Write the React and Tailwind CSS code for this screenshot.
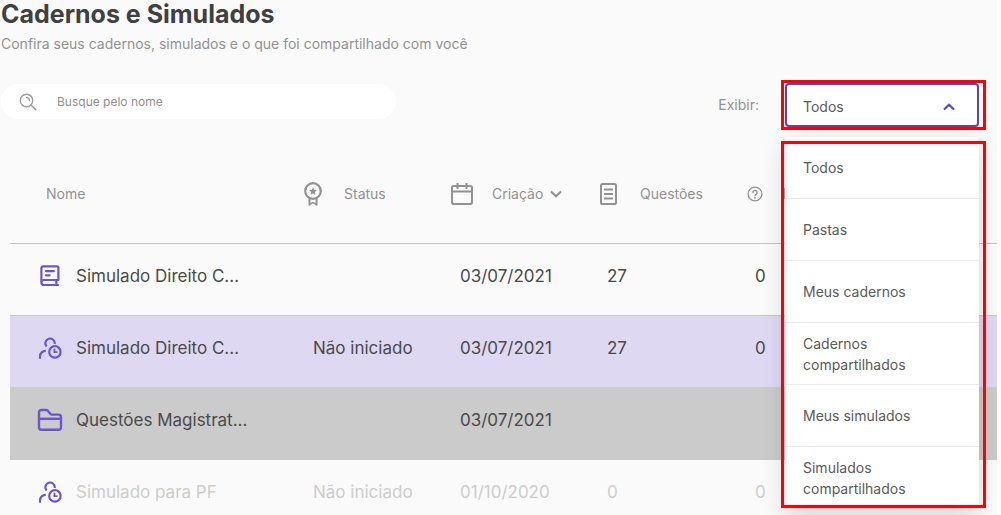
import { useState } from 'react';
import clsx from 'clsx';

const OPTIONS = [
  'Todos',
  'Pastas',
  'Meus cadernos',
  'Cadernos compartilhados',
  'Meus simulados',
  'Simulados compartilhados',
];

const ROWS = [
  { id: 1, type: 'book', name: 'Simulado Direito C...', status: '', date: '03/07/2021', total: '27', done: '0', tone: 'plain' },
  { id: 2, type: 'user', name: 'Simulado Direito C...', status: 'Não iniciado', date: '03/07/2021', total: '27', done: '0', tone: 'selected' },
  { id: 3, type: 'folder', name: 'Questões Magistrat...', status: '', date: '03/07/2021', total: '', done: '', tone: 'folder' },
  { id: 4, type: 'user', name: 'Simulado para PF', status: 'Não iniciado', date: '01/10/2020', total: '0', done: '0', tone: 'disabled' },
];

const TONES = {
  plain: 'border-[#c8c8c8] text-[#4a4a4a]',
  selected: 'border-[#cccccc] bg-[#ded8f2] text-[#4a4a4a]',
  folder: 'border-[#cccccc] bg-[#cbcbcb] text-[#4a4a4a]',
  disabled: 'border-[#c8c8c8] text-[#cdcdcd]',
};

function SearchIcon() {
  return (
    <svg width="18" height="18" viewBox="0 0 18 18" fill="none" stroke="currentColor" strokeWidth="1.4" strokeLinecap="round" aria-hidden="true">
      <circle cx="7.5" cy="7.5" r="6.2" />
      <path d="M12 12l4.8 4.8M7.6 4.6a2.9 2.9 0 0 1 2.8 2.8" />
    </svg>
  );
}

function MedalIcon() {
  return (
    <svg width="20" height="24" viewBox="0 0 20 24" fill="none" stroke="currentColor" strokeWidth="2.2" aria-hidden="true">
      <circle cx="10" cy="9" r="7.8" />
      <path d="M6.5 16v7.6M13.5 16v7.6" strokeWidth="2" />
      <path d="M6.5 22.4l3.5-1.8 3.5 1.8" strokeWidth="1.6" />
      <path d="M10 5.2l1.2 2.5 2.7.4-2 1.900.5 2.700-2.400-1.300-2.400 1.300.5-2.700-2-1.900 2.700-.4z" fill="currentColor" stroke="none" />
    </svg>
  );
}

function CalendarIcon() {
  return (
    <svg width="24" height="24" viewBox="0 0 24 24" fill="none" stroke="currentColor" strokeWidth="2" aria-hidden="true">
      <rect x="2" y="4" width="20" height="18" rx="1.8" />
      <path d="M2 9.5h20M7.5 1v6M16.5 1v6" />
    </svg>
  );
}

function SheetIcon() {
  return (
    <svg width="20" height="24" viewBox="0 0 20 24" fill="none" stroke="currentColor" strokeWidth="2" aria-hidden="true">
      <rect x="2" y="2" width="15" height="20" rx="1.6" />
      <path d="M5 7.5h9M5 12h9M5 16.5h9" />
    </svg>
  );
}

function HelpIcon() {
  return (
    <svg width="16" height="16" viewBox="0 0 16 16" fill="none" stroke="currentColor" strokeWidth="1.4" aria-hidden="true">
      <circle cx="8" cy="8" r="6.9" />
      <path d="M5.9 6.5a2.1 2.1 0 1 1 3.2 1.8c-.7.4-1.1.8-1.1 1.5" strokeLinecap="round" />
      <circle cx="8" cy="11.8" r=".9" fill="currentColor" stroke="none" />
    </svg>
  );
}

function BookIcon() {
  return (
    <svg width="20" height="22" viewBox="0 0 20 22" fill="none" stroke="currentColor" strokeWidth="2.2" strokeLinejoin="round" aria-hidden="true">
      <path d="M18.8 20H4a2.6 2.6 0 0 1-2.6-2.6V3.2A1.9 1.9 0 0 1 3.3 1.4H17a1.4 1.4 0 0 1 1.4 1.4V15H4a2.5 2.5 0 0 0-2.5 2.5M16.400 15v4.800" />
      <path d="M6 6.2h7.8M6 10.400h3.600" strokeLinecap="round" />
    </svg>
  );
}

function UserClockIcon() {
  return (
    <svg width="24" height="22" viewBox="0 0 24 22" fill="none" stroke="currentColor" strokeWidth="2.2" aria-hidden="true">
      <path d="M8.6 9.4a4.7 4.7 0 1 1 8.1-2.400" />
      <path d="M2 21.800v-2.400a5.600 5.600 0 0 1 5.800-5.600" />
      <circle cx="16.900" cy="14.900" r="5.700" />
      <path d="M16.400 11.800v3.400h3" strokeWidth="1.800" />
    </svg>
  );
}

function FolderIcon() {
  return (
    <svg width="26" height="24" viewBox="0 0 26 24" fill="none" stroke="currentColor" strokeWidth="2.4" strokeLinejoin="round" aria-hidden="true">
      <path d="M2 19.3V4.400A2.400 2.400 0 0 1 4.400 2H9a2.400 2.400 0 0 1 1.800.8l2.400 3a2.400 2.400 0 0 0 1.800.8h6.600A2.400 2.400 0 0 1 24 9v10.300a2.400 2.400 0 0 1-2.400 2.400H4.400A2.400 2.400 0 0 1 2 19.300z" />
      <path d="M2 10.800h22" />
    </svg>
  );
}

function Chevron({ up }) {
  return (
    <svg width="12" height="8" viewBox="0 0 12 8" fill="none" stroke="currentColor" strokeWidth="2.2" aria-hidden="true">
      <path d={up ? 'M1 6.5l5-4.7 5 4.7' : 'M1 1.5l5 4.7 5-4.7'} />
    </svg>
  );
}

const ROW_ICONS = { book: BookIcon, user: UserClockIcon, folder: FolderIcon };

function FilterSelect() {
  const [open, setOpen] = useState(true);
  const [selected, setSelected] = useState('Todos');

  return (
    <div className="relative w-[205px]">
      <div className="border-3 border-[#ff0000] pr-1 pl-px">
        <button
          id="filter"
          type="button"
          aria-haspopup="listbox"
          aria-expanded={open}
          onClick={() => setOpen(!open)}
          className="flex h-11 w-full items-center justify-between rounded-sm border-2 border-[#5a43c0] bg-white pt-1 pr-[22px] pl-4 text-sm text-[#5a5a5a]"
        >
          {selected}
          <span className="text-[#5a43c0]">
            <Chevron up={open} />
          </span>
        </button>
      </div>

      {open && (
        <div className="absolute inset-x-0 top-full z-10 mt-[7px]">
          <ul role="listbox" aria-labelledby="filter-label" className="mr-[7px] ml-1 rounded-sm bg-white shadow-[0_8px_24px_rgba(0,0,0,0.15)]">
            {OPTIONS.map((option) => (
              <li key={option} role="option" aria-selected={option === selected} className="border-b border-[#ebebeb] last:border-0">
                <button
                  type="button"
                  onClick={() => {
                    setSelected(option);
                    setOpen(false);
                  }}
                  className="flex h-[61px] w-full items-center pr-12 pl-[18px] text-left text-sm leading-[21px] text-[#5a5a5a]"
                >
                  {option}
                </button>
              </li>
            ))}
          </ul>
          <div className="pointer-events-none absolute inset-x-0 top-1 bottom-0 border-3 border-[#ff0000]" />
        </div>
      )}
    </div>
  );
}

export default function App() {
  const [query, setQuery] = useState('');

  return (
    <div className="h-screen overflow-hidden bg-white pr-1 font-['Inter',sans-serif]">
      <main className="min-h-full bg-[#fafafa]">
        <header className="pl-px">
          <h1 className="text-[25px] leading-7 font-bold text-[#404040]">Cadernos e Simulados</h1>
          <p className="mt-1.5 text-sm text-[#929292]">
            Confira seus cadernos, simulados e o que foi compartilhado com você
          </p>
        </header>

        {/* Busca e filtro */}
        <div className="mt-[26px] flex items-start justify-between pr-[11px] pl-px">
          <label className="mt-1 flex h-[35px] w-[395px] items-center gap-5 rounded-full bg-white pl-[18px] text-[#9b9b9b]">
            <SearchIcon />
            <input
              type="text"
              value={query}
              onChange={(e) => setQuery(e.target.value)}
              placeholder="Busque pelo nome"
              aria-label="Busque pelo nome"
              className="flex-1 bg-transparent text-xs outline-none placeholder:text-[#8f8f8f]"
            />
          </label>
          <div className="flex items-center gap-[22px]">
            <label id="filter-label" htmlFor="filter" className="text-sm text-[#929292]">
              Exibir:
            </label>
            <FilterSelect />
          </div>
        </div>

        {/* Tabela */}
        <div className="mt-4 pl-[10px]">
          <table className="w-full table-fixed border-collapse text-left">
            <thead>
              <tr className="h-[97px] border-b border-[#c4c4c4] text-sm text-[#929292]">
                <th className="w-[293px] pl-9 font-normal">Nome</th>
                <th className="w-[147px] font-normal">
                  <span className="flex items-center gap-[21px]">
                    <MedalIcon />
                    Status
                  </span>
                </th>
                <th className="w-[149px] font-normal">
                  <button type="button" className="flex items-center gap-[18px]">
                    <CalendarIcon />
                    <span className="flex items-center gap-[7px]">
                      Criação
                      <Chevron />
                    </span>
                  </button>
                </th>
                <th className="w-[148px] font-normal">
                  <span className="flex items-center gap-[21px]">
                    <SheetIcon />
                    Questões
                  </span>
                </th>
                <th className="font-normal">
                  <span className="flex items-center gap-5">
                    <HelpIcon />
                    I
                  </span>
                </th>
              </tr>
            </thead>
            <tbody>
              {ROWS.map((row) => {
                const Icon = ROW_ICONS[row.type];
                return (
                  <tr key={row.id} className={clsx('h-[72px] border-b text-[17px] leading-6', TONES[row.tone])}>
                    <td className="pb-1.5 pl-[26px]">
                      <span className="flex items-center gap-3">
                        <span className="flex w-7 justify-center text-[#6c55d0]">
                          <Icon />
                        </span>
                        {row.name}
                      </span>
                    </td>
                    <td className="pb-1.5 pl-2.5">{row.status}</td>
                    <td className="pb-1.5 pl-2.5">{row.date}</td>
                    <td className="pb-1.5 pl-2">{row.total}</td>
                    <td className="pb-1.5 pl-2">{row.done}</td>
                  </tr>
                );
              })}
            </tbody>
          </table>
        </div>
      </main>
    </div>
  );
}
